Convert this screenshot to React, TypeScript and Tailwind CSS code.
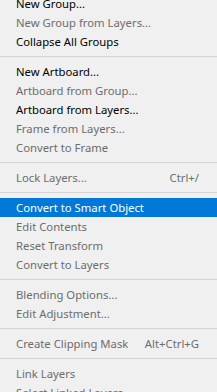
type Item =
  | { sep: true }
  | { label: string; shortcut?: string; enabled?: boolean; active?: boolean }

const items: Item[] = [
  { label: 'New Group...', enabled: true },
  { label: 'New Group from Layers...' },
  { label: 'Collapse All Groups', enabled: true },
  { sep: true },
  { label: 'New Artboard...', enabled: true },
  { label: 'Artboard from Group...' },
  { label: 'Artboard from Layers...', enabled: true },
  { label: 'Frame from Layers...' },
  { label: 'Convert to Frame' },
  { sep: true },
  { label: 'Lock Layers...', shortcut: 'Ctrl+/' },
  { sep: true },
  { label: 'Convert to Smart Object', enabled: true, active: true },
  { label: 'Edit Contents' },
  { label: 'Reset Transform' },
  { label: 'Convert to Layers' },
  { sep: true },
  { label: 'Blending Options...' },
  { label: 'Edit Adjustment...' },
  { sep: true },
  { label: 'Create Clipping Mask', shortcut: 'Alt+Ctrl+G' },
  { sep: true },
  { label: 'Link Layers' },
  { label: 'Select Linked Layers' },
]

export default function App() {
  return (
    <div className="w-[217px] h-[392px] overflow-hidden bg-[#f0f0f0] font-['Noto_Sans',sans-serif] text-[11.3px]">
      <div className="-mt-[6px] flex flex-col">
        {items.map((item, i) =>
          'sep' in item ? (
            <div key={i} className="h-[11px] pt-[5px]">
              <div className="h-px bg-[#d4d4d4]" />
            </div>
          ) : (
            <div
              key={i}
              className={`h-[19px] flex items-center pl-4 pr-[18px] leading-none ${
                item.active
                  ? 'bg-[#0078d7] text-white'
                  : item.enabled
                  ? 'text-[#000]'
                  : 'text-[#6d6d6d]'
              }`}
            >
              <span className="flex-1 whitespace-nowrap">{item.label}</span>
              {item.shortcut && <span className="whitespace-nowrap">{item.shortcut}</span>}
            </div>
          )
        )}
      </div>
    </div>
  )
}
